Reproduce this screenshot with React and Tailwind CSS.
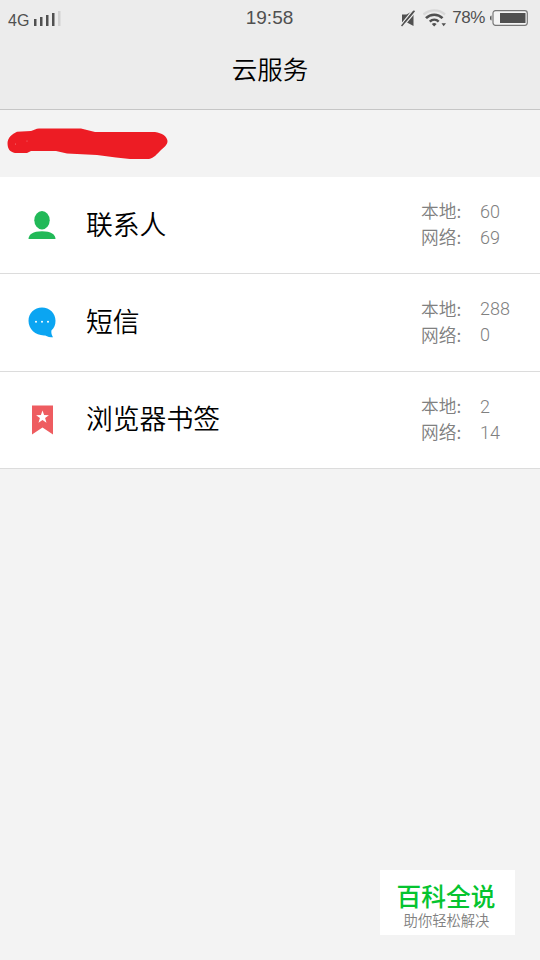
import React from 'react'

const items = [
  { id: 'contacts', label: '联系人', local: 60, cloud: 69 },
  { id: 'sms', label: '短信', local: 288, cloud: 0 },
  { id: 'bookmarks', label: '浏览器书签', local: 2, cloud: 14 },
]

const ContactIcon = () => (
  <svg width="28" height="28" viewBox="0 0 28 28" fill="#22b958">
    <ellipse cx="14" cy="9.2" rx="7.7" ry="9.2" />
    <path d="M0.5 28C0.5 23.5 5 20.2 14 20.2S27.5 23.5 27.5 28Z" />
  </svg>
)

const MessageIcon = () => (
  <svg width="28" height="31" viewBox="0 0 28 31">
    <path d="M14 0.5C21.6 0.5 27.5 6.2 27.5 13.8C27.5 18 26.2 21 23.4 23.6C23.1 26 23.6 28 25 30.3C22.2 30.2 19.5 29.7 17.2 28.4C8 29 0.5 22.6 0.5 13.8C0.5 6.2 6.4 0.5 14 0.5Z" fill="#0ba5f2" />
    <g fill="#fff">
      <circle cx="8" cy="14.7" r="1" />
      <circle cx="14" cy="14.7" r="1" />
      <circle cx="20" cy="14.7" r="1" />
    </g>
  </svg>
)

const BookmarkIcon = () => (
  <svg width="22" height="30" viewBox="0 0 22 30">
    <path d="M1 0.5H22V29.5L11.5 22.5L1 29.5Z" fill="#ee5c60" />
    <path d="M11.5 5.5L13.1 10.1L17.9 10.2L14.1 13.1L15.5 17.7L11.5 15L7.5 17.7L8.9 13.1L5.1 10.2L9.9 10.1Z" fill="#fff" />
  </svg>
)

const icons = {
  contacts: <ContactIcon />,
  sms: <MessageIcon />,
  bookmarks: <BookmarkIcon />,
}

const StatusBar = () => (
  <div className="grid h-9 grid-cols-3 items-center pl-2 pr-3 font-['Liberation_Sans',sans-serif] text-[#505050]">
    <div className="flex items-center gap-1 pt-0.5">
      <span className="pt-1 text-base leading-none">4G</span>
      <svg width="28" height="16" viewBox="0 0 28 16" fill="#505050">
        <rect x="1" y="8" width="2.5" height="7" />
        <rect x="7" y="6" width="2.5" height="9" />
        <rect x="13" y="4" width="2.5" height="11" />
        <rect x="19" y="2" width="2.5" height="13" />
        <rect x="25" y="0" width="2.5" height="15" fill="#d2d2d2" />
      </svg>
    </div>
    <div className="pb-px pl-[3px] text-center text-[19px] leading-none">19:58</div>
    <div className="flex items-center justify-end">
      {/* muted speaker */}
      <svg className="mr-[7px] shrink-0" width="15" height="17" viewBox="0 0 15 17">
        <path d="M1 4.5H5.5L12.5 0.5V16L6 12.5H1Z" fill="#505050" />
        <path d="M-0.5 15.3L12.3 -0.5M1.5 17L14.3 2" stroke="#ececec" strokeWidth="1.3" />
        <path d="M0.5 16L13.5 0.8" stroke="#505050" strokeWidth="1.5" />
      </svg>
      <svg className="mr-[5px] shrink-0" width="24" height="18" viewBox="0 0 24 18" fill="none">
        <path d="M0.5 5.5C7 0 16 0 22 5.5" stroke="#d8d8d8" strokeWidth="2.4" />
        <path d="M3 9.2C7.5 4.6 15 4.6 19.5 9.2" stroke="#505050" strokeWidth="2.6" />
        <path d="M6.8 12.6C9.3 10 13.2 10 15.7 12.6" stroke="#505050" strokeWidth="2.4" />
        <path d="M8.8 15Q11.2 13 13.6 15L11.2 17.4Z" fill="#505050" />
        <path d="M18.5 14.3H23L20.7 17.3Z" fill="#505050" />
      </svg>
      <span className="mr-1 pb-px text-[17px] leading-none tracking-[-0.4px]">78%</span>
      <svg className="shrink-0" width="39" height="16" viewBox="0 0 39 16">
        <path d="M2.5 5.5C0.5 5.5 0.5 10.5 2.5 10.5Z" fill="#505050" />
        <rect x="4" y="0.7" width="34.3" height="14.6" rx="2.5" fill="#f4f4f4" stroke="#777" strokeWidth="1.2" />
        <rect x="11" y="3" width="25.5" height="10" fill="#505050" />
      </svg>
    </div>
  </div>
)

const CountLine = ({ name, value }) => (
  <div className="flex h-[26px] items-center">
    <span className="w-[59px] pb-[3px] text-[17.7px] font-[350]">{name}:</span>
    <span className="font-['Roboto','Noto_Sans_CJK_SC',sans-serif] text-lg font-light">{value}</span>
  </div>
)

const App = () => {
  return (
    <div className="flex h-[960px] w-[540px] flex-col overflow-hidden bg-[#f3f3f3] font-['Noto_Sans_CJK_SC',sans-serif]">
      {/* Header */}
      <header className="h-[110px] border-b border-[#c6c6c6] bg-[#ececec]">
        <StatusBar />
        <h1 className="pt-[14px] text-center text-[25.5px] font-[350] leading-9 text-black">云服务</h1>
      </header>

      {/* Account, scribbled over */}
      <div className="h-[67px] pl-[7px] pt-[18px]">
        <svg width="162" height="33" viewBox="0 0 162 33">
          <path d="M0.5 15C0.5 10 5 6 10 3.8L24 3C27 2 29 0.5 32 0.5H74L80 2L88 4H148C155 5 160 8 160.5 13C160.5 17 157 19 154 22C150 26 147 30 142 31H123L109 29.5L90 27L60 25.5L49 23H24L20 25H8C3 24 0.5 21 0.5 15Z" fill="#ed1c24" />
          <circle cx="20" cy="13" r="0.5" fill="#f7888c" />
          <circle cx="8.5" cy="16" r="0.5" fill="#f7888c" />
        </svg>
      </div>

      {/* Sync list */}
      <ul>
        {items.map((item) => (
          <li key={item.id} className="flex h-[97.3px] items-center border-b border-[#dcdcdc] bg-white">
            <div className="flex w-[86px] justify-center pr-[2px]">{icons[item.id]}</div>
            <p className="flex-1 pb-[3px] text-[26.8px] font-[350] leading-10 text-black">{item.label}</p>
            <div className="w-[119px] text-[#808080]">
              <CountLine name="本地" value={item.local} />
              <CountLine name="网络" value={item.cloud} />
            </div>
          </li>
        ))}
      </ul>

      <footer className="mb-[25px] mr-[25px] mt-auto flex h-[65px] w-[135px] flex-col items-center self-end bg-white pr-[3px] pt-[6px]">
        <p className="text-[24.7px] font-medium leading-[38px] text-[#05c42f]">百科全说</p>
        <p className="-mt-px pl-px text-[14.3px] font-[350] leading-[14px] text-[#808080]">助你轻松解决</p>
      </footer>
    </div>
  )
}

export default App
